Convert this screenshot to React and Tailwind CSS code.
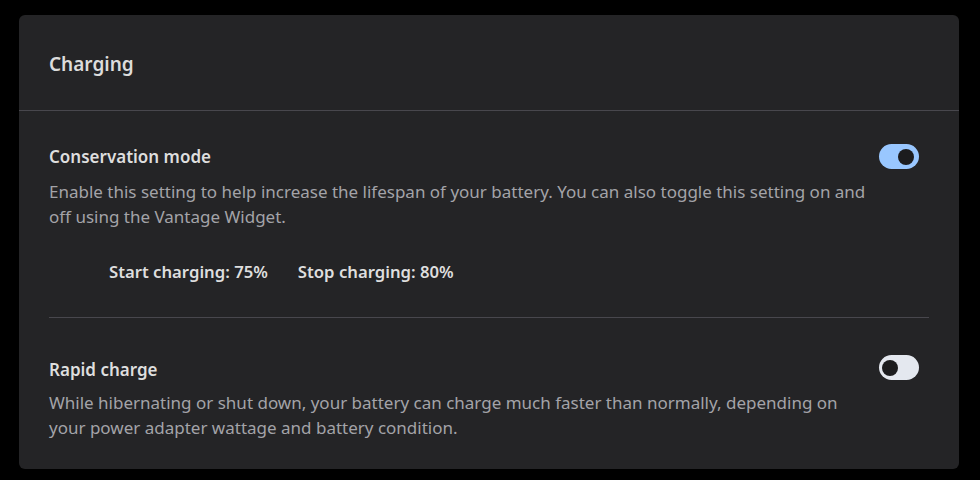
export default function App() {
  const font = { fontFamily: '"Noto Sans", "Open Sans", sans-serif' };
  return (
    <div className="w-[980px] h-[480px] bg-black pt-[15px] pl-[19px]" style={font}>
      <div className="w-[940px] h-[454px] bg-[#242426] rounded-[6px] flex flex-col">
        <div className="h-[96px] flex items-center px-[30px] border-b border-[#48474d]">
          <h2 className="text-[19px] font-semibold text-[#dcdcdc] leading-none pt-[4px]">Charging</h2>
        </div>
        <div className="px-[30px]">
          <div className="pt-[35px] pb-[34px] border-b border-[#48474d] flex">
            <div className="flex-1">
              <div className="text-[17px] font-semibold text-[#dedede] leading-[22px]">Conservation mode</div>
              <p className="mt-[11px] text-[17px] text-[#a3a3a8] leading-[25px] whitespace-nowrap">
                Enable this setting to help increase the lifespan of your battery. You can also toggle this setting on and
                <br />
                off using the Vantage Widget.
              </p>
              <div className="mt-[32px] pl-[60px] flex gap-[30px] text-[16.7px] font-semibold text-[#dedede] leading-[22px]">
                <span>Start charging: 75%</span>
                <span>Stop charging: 80%</span>
              </div>
            </div>
            <div className="pr-[10px] -mt-[2px]">
              <div className="w-[40px] h-[25px] rounded-full bg-[#99c7ff] flex items-center justify-end pr-[5px]">
                <div className="w-[16px] h-[16px] rounded-full bg-[#1c1c1e]" />
              </div>
            </div>
          </div>
          <div className="pt-[41px] flex">
            <div className="flex-1">
              <div className="text-[17px] font-semibold text-[#dedede] leading-[22px]">Rapid charge</div>
              <p className="mt-[9px] text-[17px] text-[#a3a3a8] leading-[25px] whitespace-nowrap">
                While hibernating or shut down, your battery can charge much faster than normally, depending on
                <br />
                your power adapter wattage and battery condition.
              </p>
            </div>
            <div className="pr-[10px] -mt-[4px]">
              <div className="w-[40px] h-[25px] rounded-full bg-[#e4e8ef] flex items-center pl-[3px]">
                <div className="w-[16px] h-[16px] rounded-full bg-[#1c1c1e]" />
              </div>
            </div>
          </div>
        </div>
      </div>
    </div>
  );
}
